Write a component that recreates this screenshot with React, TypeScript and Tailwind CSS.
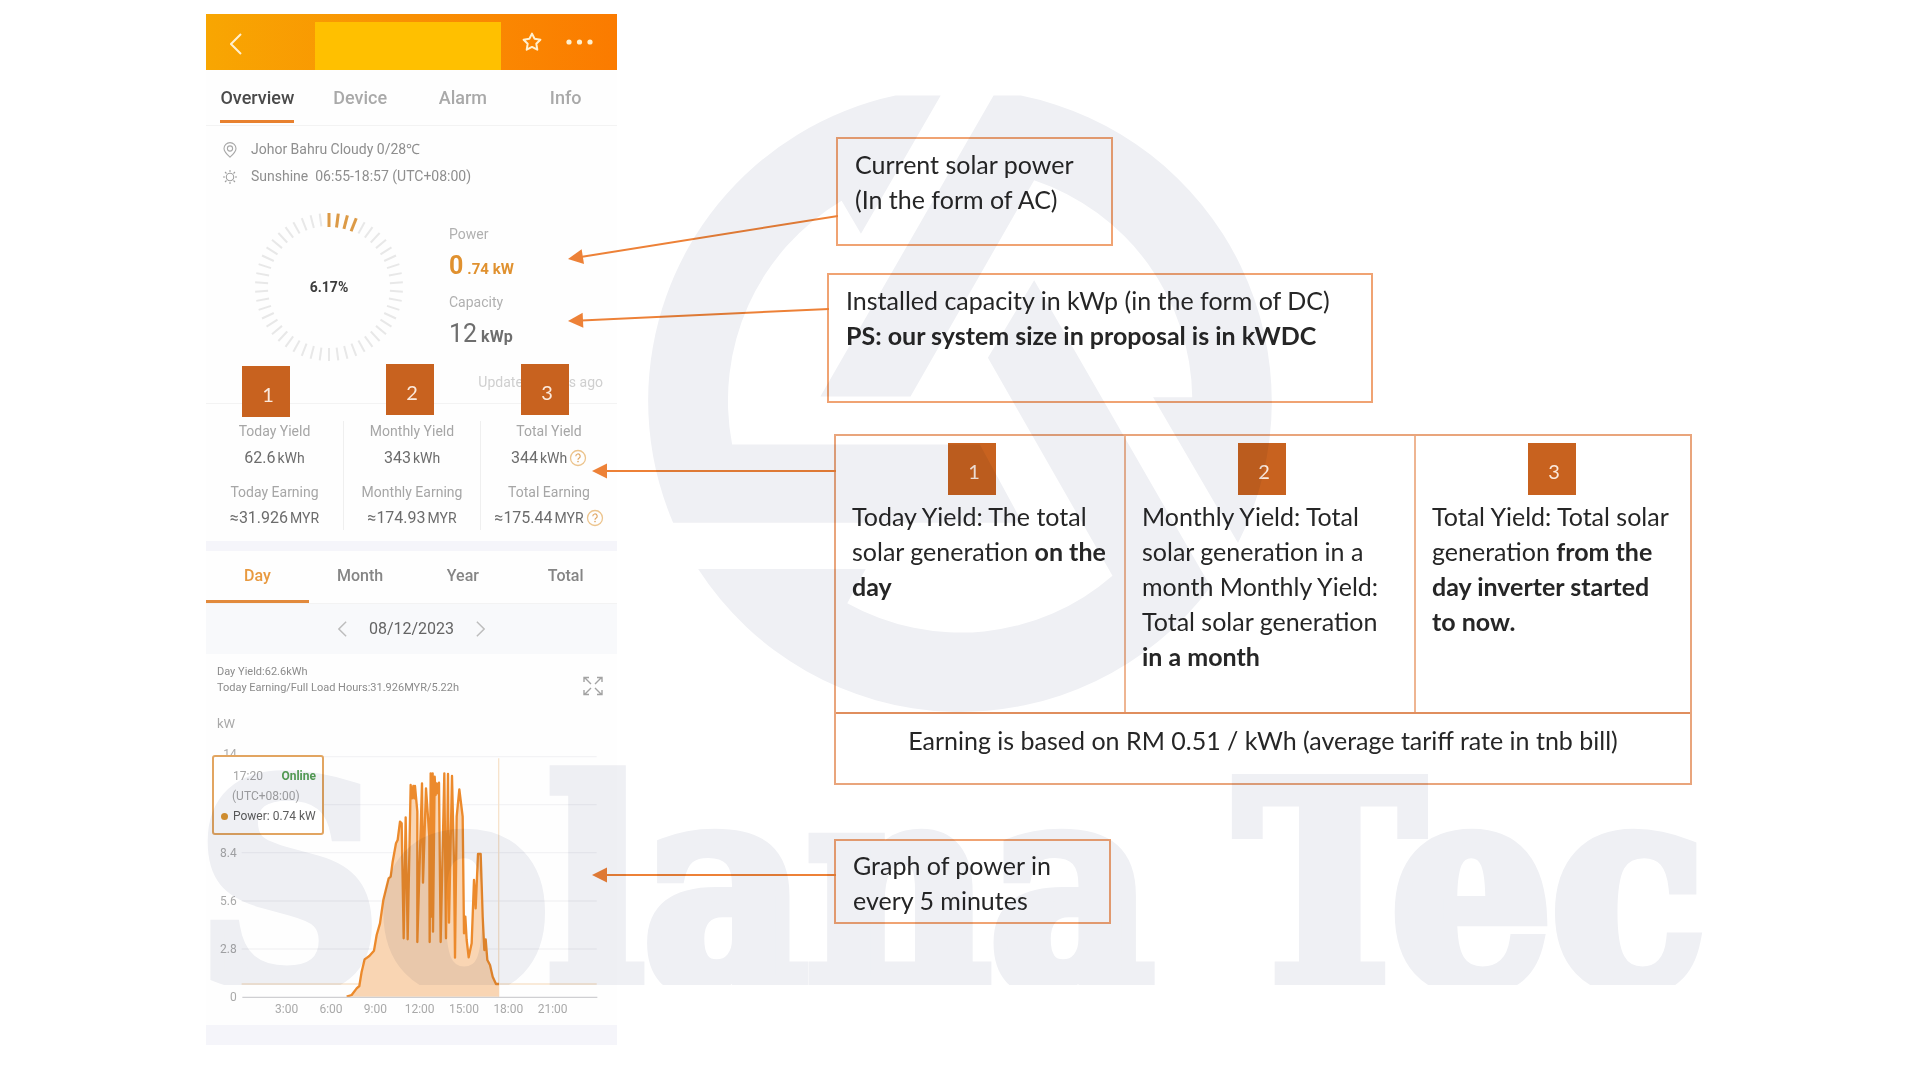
import type { ReactNode } from "react";

const ORANGE = "#ed8137";

function QuestionIcon() {
  return (
    <svg viewBox="0 0 18 18" className="h-[18px] w-[18px] shrink-0" fill="none" aria-hidden="true">
      <circle cx="9" cy="9" r="7.5" stroke="#ecc48d" strokeWidth="1.3" />
      <path d="M6.8 7.2a2.2 2.2 0 1 1 3.3 1.9c-.8.4-1.1.8-1.1 1.6" stroke="#e0a866" strokeWidth="1.2" />
      <circle cx="9" cy="12.6" r=".8" fill="#e0a866" />
    </svg>
  );
}

function Chevron({ flip = false, className }: { flip?: boolean; className: string }) {
  return (
    <svg viewBox="0 0 12 22" className={className} fill="none" stroke="currentColor" aria-hidden="true">
      <path d={flip ? "M1 1l10 10L1 21" : "M11 1L1 11l10 10"} strokeWidth="2" />
    </svg>
  );
}

function Header() {
  return (
    <header className="flex h-14 items-center bg-linear-to-r from-[#f8a602] via-[#f99003] to-[#fb7b00] text-[#fff0cf]">
      <button aria-label="Back" className="ml-6 mt-1">
        <Chevron className="h-[22px] w-3" />
      </button>
      <div className="ml-[73px] mt-2 h-12 w-[186px] bg-[#ffc000]" />
      <div className="ml-auto mr-6 flex items-center gap-6">
        <button aria-label="Favourite">
          <svg viewBox="0 0 20 20" className="h-5 w-5" fill="none" stroke="currentColor" strokeWidth="2" strokeLinejoin="round">
            <path d="M10 1.6l2.6 5.2 5.8.9-4.1 4 1 6-5.3-2.8-5.3 2.8 1-6-4.1-4 5.8-.9z" />
          </svg>
        </button>
        <button aria-label="More">
          <svg viewBox="0 0 27 6" className="h-[6px] w-[27px]" fill="currentColor">
            <circle cx="3" cy="3" r="2.6" />
            <circle cx="13.5" cy="3" r="2.6" />
            <circle cx="24" cy="3" r="2.6" />
          </svg>
        </button>
      </div>
    </header>
  );
}

function MainTabs() {
  return (
    <nav className="grid h-14 grid-cols-4 border-b border-[#f3f3f3] text-[18px] font-medium text-[#a9a9a9]">
      {["Overview", "Device", "Alarm", "Info"].map((t, i) => (
        <button key={t} className="flex items-start justify-center">
          <span
            className={
              i === 0
                ? "h-[53px] border-b-3 border-[#e8812f] pt-4 leading-6 text-[#4a4a4a]"
                : "pt-4 leading-6"
            }
          >
            {t}
          </span>
        </button>
      ))}
    </nav>
  );
}

function Weather() {
  return (
    <div className="pl-4 pt-[10px] text-[14px] text-[#8e8e8e]">
      <div className="flex h-[27px] items-center gap-[13px]">
        <svg viewBox="0 0 16 16" className="h-4 w-4" fill="none" stroke="#a8a8a8" strokeWidth="1.1" aria-hidden="true">
          <path d="M8 15.2C5 12.600 2 9.800 2 6.600a6 6 0 0 1 12 0c0 3.200-3 6-6 8.600z" />
          <circle cx="8" cy="6.500" r="2.600" />
        </svg>
        <span>Johor Bahru Cloudy 0/28℃</span>
      </div>
      <div className="flex h-[27px] items-center gap-[13px]">
        <svg viewBox="0 0 16 16" className="h-4 w-4" fill="none" stroke="#a0a0a0" strokeWidth="1.1" aria-hidden="true">
          <circle cx="8" cy="8" r="3.700" />
          <path d="M8 1v2M8 13v2M1 8h2M13 8h2M3 3l1.500 1.500M11.500 11.500L13 13M3 13l1.500-1.500M11.500 4.500L13 3" />
        </svg>
        <span className="whitespace-pre">Sunshine  06:55-18:57 (UTC+08:00)</span>
      </div>
    </div>
  );
}

function Gauge() {
  return (
    <div className="relative ml-12 h-[150px] w-[150px]">
      <svg viewBox="-75 -75 150 150" className="h-full w-full" aria-hidden="true">
        {Array.from({ length: 50 }, (_, i) => (
          <line
            key={i}
            y1={i < 4 ? -60 : -61}
            y2="-74"
            stroke={i < 4 ? "#dc9a46" : "#e8e8e8"}
            strokeWidth={i < 4 ? 3 : 2}
            transform={`rotate(${i * 7.2})`}
          />
        ))}
      </svg>
      <span className="absolute inset-0 flex items-center justify-center text-[14px] font-bold text-[#3c3c3c]">
        6.17%
      </span>
    </div>
  );
}

function PowerSummary() {
  return (
    <div className="mt-[22px] flex">
      <Gauge />
      <div className="ml-[45px] pt-[10px] text-[14px] text-[#b0b0b0]">
        <div className="h-6 leading-6">Power</div>
        <div className="mt-1 flex h-8 items-baseline gap-1 font-bold text-[#e0912f]">
          <span className="text-[25px] leading-8">0</span>
          <span className="text-[15px]">.74 kW</span>
        </div>
        <div className="mt-2 h-6 leading-6">Capacity</div>
        <div className="mt-1 flex h-8 items-baseline gap-1 text-[#6e6e6e]">
          <span className="text-[25px] leading-8">12</span>
          <span className="text-[16px] font-bold">kWp</span>
        </div>
      </div>
    </div>
  );
}

type Stat = {
  n: string;
  badge: string;
  a: string;
  av: string;
  b: string;
  bv: string;
  help?: boolean;
};

const stats: Stat[] = [
  { n: "1", badge: "-top-[38px] left-9", a: "Today Yield", av: "62.6", b: "Today Earning", bv: "≈31.926" },
  { n: "2", badge: "-top-10 left-[43px]", a: "Monthly Yield", av: "343", b: "Monthly Earning", bv: "≈174.93" },
  { n: "3", badge: "-top-10 left-[41px]", a: "Total Yield", av: "344", b: "Total Earning", bv: "≈175.44", help: true },
];

function StatValue({ value, unit, help }: { value: string; unit: string; help?: boolean }) {
  return (
    <div className="flex h-6 items-center justify-center gap-[2px] text-[#6c6c6c]">
      <span className="flex items-baseline gap-[2px]">
        <span className="text-[16px]">{value}</span>
        <span className="text-[14px]">{unit}</span>
      </span>
      {help && <QuestionIcon />}
    </div>
  );
}

function Stats() {
  return (
    <section className="grid grid-cols-3 border-t border-[#f3f3f3] pb-[11px] text-center text-[14px] text-[#a6a6a6]">
      {stats.map((s, i) => (
        <div key={s.n} className="relative pt-[17px]">
          <div
            className={`absolute ${s.badge} flex h-[51px] w-12 items-center justify-center bg-[#c8621f] pl-1 pt-1 font-[Lato] text-[20px] text-[#fbe9dc]`}
          >
            {s.n}
          </div>
          <div className={i > 0 ? "border-l border-[#efefef]" : ""}>
            <div className="h-5 leading-5">{s.a}</div>
            <div className="mt-[5px]">
              <StatValue value={s.av} unit="kWh" help={s.help} />
            </div>
            <div className="mt-3 h-5 leading-5">{s.b}</div>
            <div className="mt-1">
              <StatValue value={s.bv} unit="MYR" help={s.help} />
            </div>
          </div>
        </div>
      ))}
    </section>
  );
}

function PeriodTabs() {
  return (
    <nav className="grid h-[53px] grid-cols-4 border-b border-[#f3f3f3] text-[16px] font-medium text-[#858585]">
      {["Day", "Month", "Year", "Total"].map((t, i) => (
        <button
          key={t}
          className={
            i === 0
              ? "h-[52px] border-b-3 border-[#e28a3c] text-[#e8993f]"
              : "h-[52px] border-b-3 border-transparent"
          }
        >
          {t}
        </button>
      ))}
    </nav>
  );
}

const CURVE =
  "440,800 455,795 470,775 478,768 485,725 494,688 508,678 522,662 530,615 540,580 550,510 566,445 572,440 578,395 588,340 593,330 600,275 605,280 611,625 617,262 623,628 632,165 636,205 640,168 643,205 645,168 652,245 652,636 666,160 669,458 678,175 688,320 689,636 692,130 694,560 698,130 699,605 704,140 707,195 710,160 714,190 717,158 722,636 733,130 738,625 744,132 747,578 756,138 762,400 765,683 770,260 778,178 788,260 792,610 796,560 800,630 806,682 815,640 822,450 827,535 834,372 842,372 848,560 853,660 857,628 862,690 870,705 878,740 888,762 897,762";

function Chart() {
  const rows = [
    { y: 80, label: "" },
    { y: 224, label: "" },
    { y: 368, label: "8.4" },
    { y: 513, label: "5.6" },
    { y: 657, label: "2.8" },
  ];
  return (
    <div className="relative mt-[11px]">
      <svg viewBox="18 45 1233 840" className="w-full" role="img" aria-label="Power over the day">
        {rows.map((r) => (
          <line key={r.y} x1="125" x2="1190" y1={r.y} y2={r.y} stroke="#f3f3f5" strokeWidth="4" />
        ))}
        <line x1="125" x2="1190" y1="762" y2="762" stroke="#f7e3cc" strokeWidth="4" />
        <line x1="896" x2="896" y1="85" y2="800" stroke="#f7e3cc" strokeWidth="4" />
        <polygon points={`${CURVE} 897,800`} fill="#f9d5b3" />
        <polyline points={CURVE} fill="none" stroke="#ec8a2c" strokeWidth="7" strokeLinejoin="round" />
        <line x1="127" x2="1192" y1="802" y2="802" stroke="#cfcfd2" strokeWidth="4" />
        <g fontSize="36" fill="#a9a9a9">
          <text x="110" y="84" textAnchor="end">14</text>
          {rows.slice(2).map((r) => (
            <text key={r.y} x="110" y={r.y + 12} textAnchor="end">
              {r.label}
            </text>
          ))}
          <text x="110" y="812" textAnchor="end">0</text>
          {["3:00", "6:00", "9:00", "12:00", "15:00", "18:00", "21:00"].map((t, i) => (
            <text key={t} x={260 + i * 133} y="848" textAnchor="middle">
              {t}
            </text>
          ))}
        </g>
      </svg>
      <div className="absolute left-[6px] top-[10px] h-[80px] w-[112px] rounded-[3px] border-2 border-[#e2a561] bg-white pt-[9px] text-[12px] leading-5 text-[#a5a5a5]">
        <div className="flex justify-between pl-[19px] pr-[6px]">
          <span>17:20</span>
          <span className="font-bold text-[#57a257]">Online</span>
        </div>
        <div className="pl-[18px]">(UTC+08:00)</div>
        <div className="flex items-center gap-[5px] whitespace-nowrap pl-[7px] text-[#5c5c5c]">
          <span className="h-[7px] w-[7px] shrink-0 rounded-full bg-[#dc9530]" />
          Power: 0.74 kW
        </div>
      </div>
    </div>
  );
}

function Phone() {
  return (
    <main className="w-[411px] shrink-0 bg-[#fefefe] font-[Roboto,sans-serif]">
      <Header />
      <MainTabs />
      <Weather />
      <PowerSummary />
      <div className="flex h-[41px] items-center justify-end gap-[46px] pr-[14px] text-[14px] text-[#cfcfcf]">
        <span>Update</span>
        <span>s ago</span>
      </div>
      <Stats />
      <div className="h-[10px] bg-[#f5f5fa]" />
      <PeriodTabs />
      <div className="flex h-[50px] items-center justify-center gap-[22px] bg-[#f8f9fb] text-[16px] text-[#646464]">
        <button aria-label="Previous day">
          <Chevron className="h-4 w-[9px] text-[#bdbdbd]" />
        </button>
        <span>08/12/2023</span>
        <button aria-label="Next day">
          <Chevron flip className="h-4 w-[9px] text-[#bdbdbd]" />
        </button>
      </div>
      <div className="flex items-end justify-between pl-[11px] pr-[14px] pt-[10px] text-[11px] leading-4 text-[#8b8b8b]">
        <p>
          Day Yield:62.6kWh
          <br />
          Today Earning/Full Load Hours:31.926MYR/5.22h
        </p>
        <button aria-label="Full screen">
          <svg viewBox="0 0 20 20" className="h-5 w-5" fill="none" stroke="#a3a3a3" strokeWidth="1.400">
            <path d="M1 6V1.500h5M1.500 1.500L8 8M14 1.500h5V6M18.500 1.500L12 8M1 14v4.500h5M1.500 18.500L8 12M14 18.500h5V14M18.500 18.500L12 12" />
          </svg>
        </button>
      </div>
      <div className="mt-[18px] pl-[11px] text-[13px] leading-5 text-[#a9a9a9]">kW</div>
      <Chart />
      <div className="h-5 bg-[#f5f5fa]" />
    </main>
  );
}

/** Arrow that leaves its box on the left side and ends in a head on the phone. */
function Arrow({ width, drop, className }: { width: number; drop: number; className: string }) {
  const h = drop + 16;
  const tip = 8 + drop;
  const angle = (Math.atan2(-drop, width) * 180) / Math.PI;
  return (
    <svg
      viewBox={`0 0 ${width} ${h}`}
      style={{ width, height: h }}
      className={`absolute right-full max-w-none ${className}`}
      aria-hidden="true"
    >
      <line x1="8" y1={tip - (drop * 8) / width} x2={width} y2="8" stroke={ORANGE} strokeWidth="2" />
      <path d="M0 0L15 -7.500V7.500z" fill={ORANGE} transform={`translate(0 ${tip}) rotate(${angle})`} />
    </svg>
  );
}

function Note({ className, children }: { className: string; children: ReactNode }) {
  return <section className={`relative border-2 border-[#f0a373] pl-[17px] ${className}`}>{children}</section>;
}

const columns: { n: string; text: ReactNode }[] = [
  {
    n: "1",
    text: (
      <>
        Today Yield: The total
        <br />
        solar generation <b>on the<br />day</b>
      </>
    ),
  },
  {
    n: "2",
    text: (
      <>
        Monthly Yield: Total
        <br />
        solar generation in a
        <br />
        month Monthly Yield:
        <br />
        Total solar generation
        <br />
        <b>in a month</b>
      </>
    ),
  },
  {
    n: "3",
    text: (
      <>
        Total Yield: Total solar
        <br />
        generation <b>from the<br />day inverter started<br />to now.</b>
      </>
    ),
  },
];

function Explanation() {
  return (
    <section className="relative ml-[7px] mt-[31px] w-[858px] border-2 border-[#e9a57c]">
      <Arrow width={244} drop={0} className="top-[27px]" />
      <div className="grid h-[278px] grid-cols-[290px_290px_1fr] divide-x-2 divide-[#eeb592] border-b-2 border-[#e08e5e]">
        {columns.map((c) => (
          <div key={c.n} className="pl-4 pt-[7px]">
            <div className="ml-24 flex h-[52px] w-12 items-center justify-center bg-[#c8621f] pl-1 pt-1 text-[20px] text-[#fbe9dc]">
              {c.n}
            </div>
            <p className="mt-1 whitespace-nowrap">{c.text}</p>
          </div>
        ))}
      </div>
      <p className="h-[69px] pt-[9px] text-center">Earning is based on RM 0.51 / kWh (average tariff rate in tnb bill)</p>
    </section>
  );
}

function Watermark() {
  return (
    <svg
      viewBox="206 95 1510 890"
      className="pointer-events-none absolute left-[206px] top-[95px] h-[890px] w-[1510px] overflow-hidden mix-blend-multiply"
      fill="#eff0f4"
      aria-hidden="true"
    >
      <g transform="translate(600 80) scale(.4719 .4209)">
        <path d="M626 37A662 742 0 0 0 102 760A662 742 0 0 0 155 1052H895L805 866H280A492 552 0 0 1 512 287L553 365L722 37Z" />
        <path d="M834 37L467 752H658L920 238A492 552 0 0 1 1255 754H1172L1352 1100A662 742 0 0 0 892 37Z" />
        <path d="M208 1162H563L524 1243A492 552 0 0 0 1086 1178L822 660L920 476L1294 1204A662 742 0 0 1 208 1162Z" />
      </g>
      <g
        fontFamily="'DejaVu Serif Condensed','DejaVu Serif',serif"
        fontWeight="700"
        fontSize="280"
        stroke="#eff0f4"
        strokeWidth="14"
      >
        <text x="198" y="985">Solana</text>
        <text x="1236" y="985">Tec</text>
      </g>
    </svg>
  );
}

export default function App() {
  return (
    <div className="relative flex min-h-screen items-start overflow-hidden bg-white pl-[206px] pt-[14px]">
      <Phone />
      <div className="ml-[210px] pt-[123px] font-[Lato,sans-serif] text-[25px] leading-[35px] text-[#262626]">
        <Note className="ml-[9px] h-[109px] w-[277px] pt-[8px]">
          <Arrow width={270} drop={43} className="top-[69px]" />
          Current solar power
          <br />
          (In the form of AC)
        </Note>
        <Note className="mt-[27px] h-[130px] w-[546px] pt-[8px]">
          <Arrow width={261} drop={12} className="top-[26px]" />
          Installed capacity in kWp (in the form of DC)
          <br />
          <b>PS: our system size in proposal is in kWDC</b>
        </Note>
        <Explanation />
        <Note className="ml-[7px] mt-[54px] h-[85px] w-[277px] pt-[7px]">
          <Arrow width={244} drop={0} className="top-[26px]" />
          Graph of power in
          <br />
          every 5 minutes
        </Note>
      </div>
      <Watermark />
    </div>
  );
}
